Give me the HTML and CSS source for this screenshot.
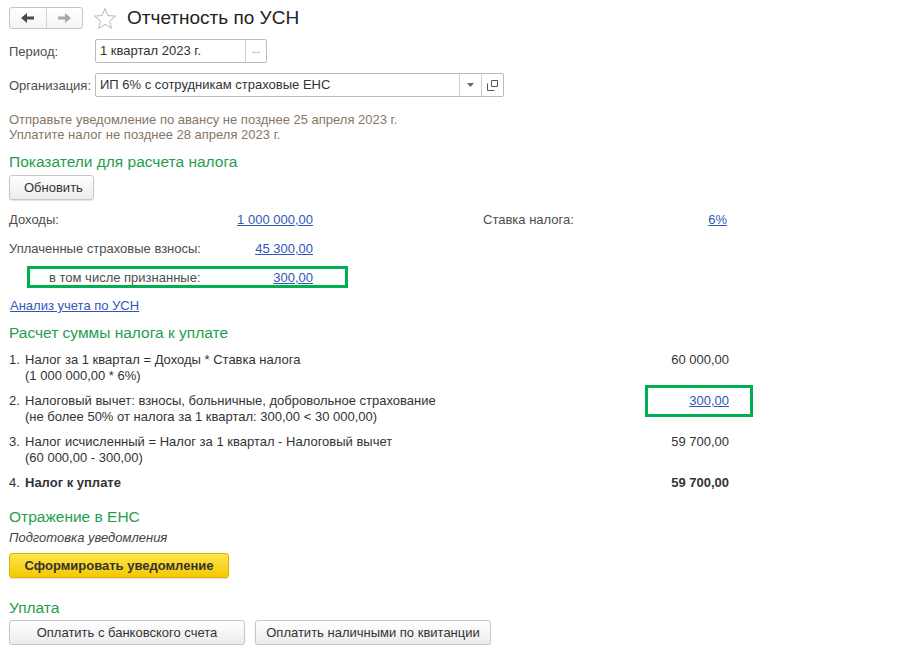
FILE: index.html
```html
<!DOCTYPE html>
<html lang="ru">
<head>
<meta charset="UTF-8">
<title>Отчетность по УСН</title>
<link rel="stylesheet" href="styles.css">
</head>
<body>
	<div class="form">
		<div class="head">
			<div class="nav">
				<span class="nav-btn">
					<svg width="14" height="10" viewBox="0 0 14 10"><path d="M0 5 L6 0 V3.5 H13 V6.5 H6 V10 Z" fill="#4a4a4a"/></svg>
				</span>
				<span class="nav-btn off">
					<svg width="14" height="10" viewBox="0 0 14 10"><path d="M14 5 L8 0 V3.5 H1 V6.5 H8 V10 Z" fill="#a8a8a8"/></svg>
				</span>
			</div>
			<svg class="star" width="24" height="23" viewBox="0 0 24 23"><path d="M12 1.5 L14.9 8.6 L22.5 9.1 L16.6 14 L18.5 21.4 L12 17.3 L5.5 21.4 L7.4 14 L1.5 9.1 L9.1 8.6 Z" fill="none" stroke="#b8b8b8" stroke-width="1"/></svg>
			<h1>Отчетность по УСН</h1>
		</div>

		<div class="field">
			<span class="label">Период:</span>
			<div class="input period">
				<span class="text">1 квартал 2023 г.</span>
				<span class="ibtn dots">...</span>
			</div>
		</div>
		<div class="field">
			<span class="label">Организация:</span>
			<div class="input org">
				<span class="text">ИП 6% с сотрудникам страховые ЕНС</span>
				<span class="ibtn"><svg width="7" height="4" viewBox="0 0 7 4"><path d="M0 0 H7 L3.5 4 Z" fill="#666"/></svg></span>
				<span class="ibtn"><svg width="11" height="11" viewBox="0 0 11 11"><path d="M4.5 0.5 H10.5 V6.5 H4.5 Z M0.5 3.5 V10.5 H7.5" fill="none" stroke="#555" stroke-width="1"/></svg></span>
			</div>
		</div>

		<div class="note">
			Отправьте уведомление по авансу не позднее 25 апреля 2023 г.<br>
			Уплатите налог не позднее 28 апреля 2023 г.
		</div>

		<h2 class="group first">Показатели для расчета налога</h2>
		<button class="btn refresh">Обновить</button>

		<div class="grid">
			<div class="row">
				<span class="label">Доходы:</span>
				<a class="num" href="#">1 000 000,00</a>
				<span></span>
				<span class="label">Ставка налога:</span>
				<a class="num" href="#">6%</a>
			</div>
			<div class="row">
				<span class="label">Уплаченные страховые взносы:</span>
				<a class="num" href="#">45 300,00</a>
			</div>
			<div class="row marked">
				<span class="label sub">в том числе признанные:</span>
				<a class="num" href="#">300,00</a>
			</div>
		</div>
		<a class="analysis" href="#">Анализ учета по УСН</a>

		<h2 class="group calc-title">Расчет суммы налога к уплате</h2>
		<div class="calc">
			<div class="item">
				<span>1.</span>
				<span>Налог за 1 квартал = Доходы * Ставка налога<br>(1 000 000,00 * 6%)</span>
				<span class="sum">60 000,00</span>
			</div>
			<div class="item">
				<span>2.</span>
				<span>Налоговый вычет: взносы, больничные, добровольное страхование<br>(не более 50% от налога за 1 квартал: 300,00 &lt; 30 000,00)</span>
				<span class="sum marked"><a href="#">300,00</a></span>
			</div>
			<div class="item">
				<span>3.</span>
				<span>Налог исчисленный = Налог за 1 квартал - Налоговый вычет<br>(60 000,00 - 300,00)</span>
				<span class="sum">59 700,00</span>
			</div>
			<div class="item total">
				<span>4.</span>
				<span>Налог к уплате</span>
				<span class="sum">59 700,00</span>
			</div>
		</div>

		<h2 class="group ens">Отражение в ЕНС</h2>
		<div class="hint">Подготовка уведомления</div>
		<button class="btn primary">Сформировать уведомление</button>

		<h2 class="group pay">Уплата</h2>
		<div class="pay-btns">
			<button class="btn wide">Оплатить с банковского счета</button>
			<button class="btn wide">Оплатить наличными по квитанции</button>
		</div>
	</div>
</body>
</html>
```

FILE: styles.css
```css
body{
	margin:0;
	background:#fff;
	font-family:"Liberation Sans", Arial, sans-serif;
	font-size:13px;
	color:#333;
}
.form{
	padding:7px 9px 0;
	display:flex;
	flex-direction:column;
	align-items:flex-start;
}
.head{
	display:flex;
	align-items:center;
	height:22px;
}
.nav{
	display:flex;
	width:72px;
	height:20px;
	border:1px solid #c4c4c4;
	border-radius:3px;
	background:linear-gradient(#fff,#f4f4f4);
}
.nav-btn{
	flex:1;
	display:flex;
	align-items:center;
	justify-content:center;
}
.nav-btn + .nav-btn{
	border-left:1px solid #d4d4d4;
}
.star{
	margin-left:10px;
}
h1{
	margin:0 0 0 10px;
	font-size:19px;
	font-weight:normal;
	color:#222;
}
.field{
	display:flex;
	align-items:center;
	margin-top:10px;
}
.field .label{
	width:86px;
	color:#4d4d4d;
}
.input{
	display:flex;
	height:22px;
	border:1px solid #bcbcbc;
	border-radius:2px;
	background:#fff;
}
.input .text{
	flex:1;
	padding:0 4px;
	line-height:22px;
	color:#333;
}
.period{
	width:170px;
}
.org{
	width:407px;
}
.ibtn{
	width:21px;
	display:flex;
	align-items:center;
	justify-content:center;
	border-left:1px solid #d0d0d0;
	color:#777;
	font-size:10px;
}
.dots{
	padding-bottom:3px;
	box-sizing:border-box;
}
.note{
	margin-top:15px;
	line-height:15px;
	color:#857666;
}
h2.group{
	margin:12px 0 0;
	font-size:15.5px;
	font-weight:normal;
	line-height:20px;
	color:#1f9e4c;
}
h2.first{
	margin-top:10px;
}
.btn{
	font-family:inherit;
	font-size:13px;
	color:#333;
	height:25px;
	padding:0 14px;
	white-space:nowrap;
	border:1px solid #c6c6c6;
	border-radius:3px;
	background:linear-gradient(#fff,#ececec);
	box-shadow:0 1px 1px rgba(0,0,0,.12);
}
.refresh{
	margin-top:3px;
	width:85px;
}
.grid{
	margin-top:5px;
}
.row{
	display:grid;
	grid-template-columns:220px 84px 170px 160px 84px;
	height:29px;
	align-items:center;
	position:relative;
}
.label{
	color:#4d4d4d;
}
.label.sub{
	padding-left:40px;
}
a{
	color:#2f58b5;
}
.num{
	text-align:right;
}
.row.marked::after{
	content:"";
	position:absolute;
	left:18px;
	top:3px;
	width:315px;
	height:16px;
	border:3px solid #00b050;
}
.analysis{
	margin:7px 0 0 1px;
	line-height:13px;
}
h2.calc-title{
	margin-top:11px;
}
.calc{
	margin-top:9px;
	display:flex;
	flex-direction:column;
	gap:9px;
	width:720px;
}
.item{
	display:grid;
	grid-template-columns:16px 1fr 100px;
	line-height:16px;
}
.sum{
	text-align:right;
	position:relative;
}
.sum.marked::after{
	content:"";
	position:absolute;
	left:16px;
	top:-8px;
	width:102px;
	height:26px;
	border:3px solid #00b050;
}
.total{
	font-weight:bold;
}
.total span:first-child{
	font-weight:normal;
}
h2.ens{
	margin-top:16px;
}
.hint{
	margin-top:3px;
	line-height:16px;
	font-style:italic;
	color:#444;
}
.primary{
	margin-top:7px;
	width:220px;
	font-weight:bold;
	border-color:#d9b400;
	background:linear-gradient(#ffe54d,#f4c900);
}
h2.pay{
	margin-top:20px;
}
.pay-btns{
	display:flex;
	gap:10px;
	margin-top:2px;
}
.wide{
	width:236px;
	padding:0;
}
```
